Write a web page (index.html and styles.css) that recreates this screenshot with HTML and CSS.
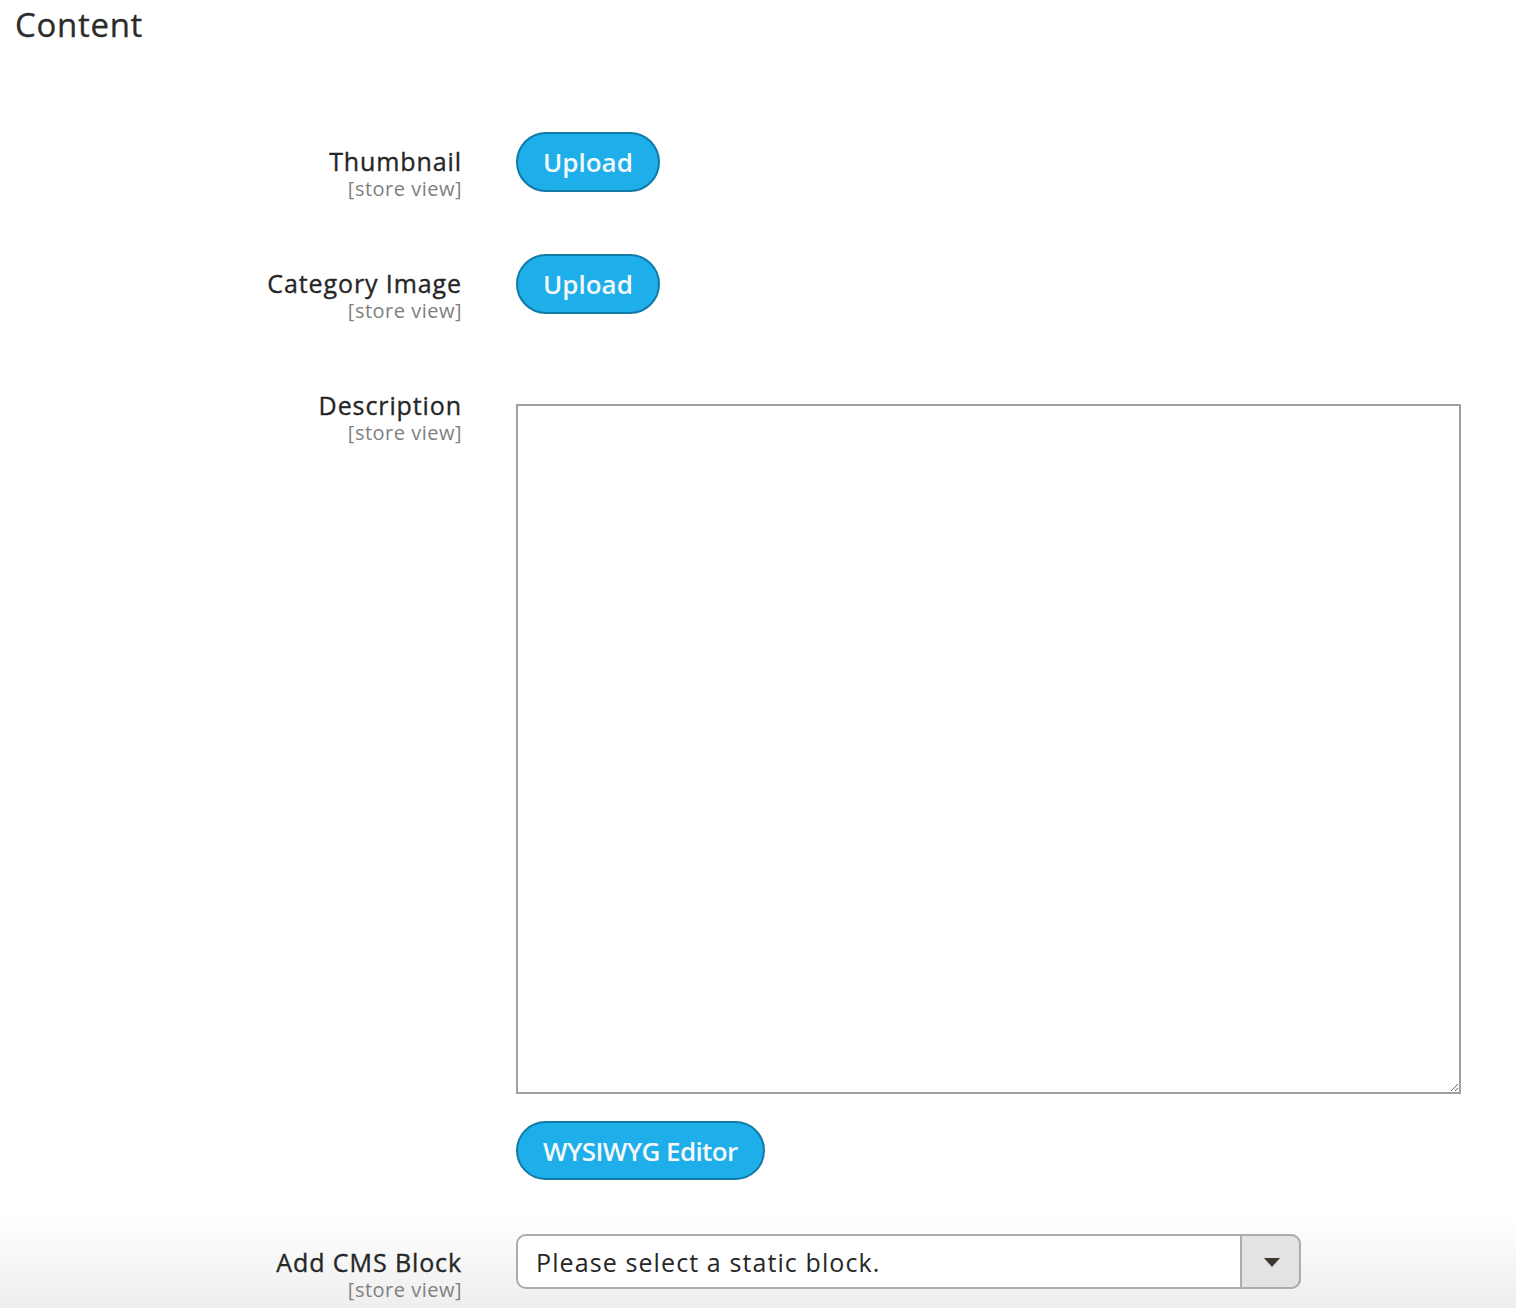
FILE: index.html
```html
<!DOCTYPE html>
<html lang="en">
<head>
  <meta charset="UTF-8" />
  <meta name="viewport" content="width=device-width, initial-scale=1.0"/>
  <title>Category Content</title>
  <link rel="stylesheet" href="styles.css">
</head>
<body>
  <h1 class="section-title">Content</h1>

  <div class="form">
    <div class="field">
      <div class="field-label">
        <span class="label-name">Thumbnail</span>
        <span class="label-scope">[store view]</span>
      </div>
      <div class="field-control">
        <button class="btn">Upload</button>
      </div>
    </div>

    <div class="field">
      <div class="field-label">
        <span class="label-name">Category Image</span>
        <span class="label-scope">[store view]</span>
      </div>
      <div class="field-control">
        <button class="btn">Upload</button>
      </div>
    </div>

    <div class="field field-description">
      <div class="field-label">
        <span class="label-name">Description</span>
        <span class="label-scope">[store view]</span>
      </div>
      <div class="field-control">
        <textarea class="textarea"></textarea>
        <button class="btn btn-wysiwyg">WYSIWYG Editor</button>
      </div>
    </div>

    <div class="field field-select">
      <div class="field-label">
        <span class="label-name">Add CMS Block</span>
        <span class="label-scope">[store view]</span>
      </div>
      <div class="field-control">
        <div class="select-wrap">
          <select class="select">
            <option>Please select a static block.</option>
          </select>
          <span class="select-arrow"></span>
        </div>
      </div>
    </div>
  </div>
</body>
</html>
```

FILE: styles.css
```css
* {
  box-sizing: border-box;
  margin: 0;
  padding: 0;
  font-family: 'Open Sans', 'Noto Sans', sans-serif;
}

body {
  color: #333;
  min-height: 1308px;
  background: linear-gradient(to bottom, #fff 1215px, #eeeeee 1308px);
  overflow: hidden;
}

.section-title {
  font-size: 33px;
  font-weight: 500;
  letter-spacing: 0.7px;
  line-height: 50px;
  padding-left: 15px;
  color: #2b2b2b;
  -webkit-text-stroke: 0.3px #2b2b2b;
}

.form {
  display: flex;
  flex-direction: column;
  gap: 52px;
  margin-top: 82px;
}

.field {
  display: grid;
  grid-template-columns: 462px 945px;
  column-gap: 54px;
  align-items: start;
}

.field-label {
  display: flex;
  flex-direction: column;
  align-items: flex-end;
  padding-top: 14px;
  text-align: right;
}

.label-name {
  font-size: 25px;
  font-weight: 500;
  letter-spacing: 0.9px;
  line-height: 30px;
  color: #262626;
  -webkit-text-stroke: 0.35px #262626;
}

.label-scope {
  font-size: 20px;
  letter-spacing: 0.5px;
  line-height: 26px;
  color: #808080;
}

.btn {
  height: 60px;
  padding: 0 25px;
  background-color: #1eaee9;
  border: 2px solid #127aa6;
  border-radius: 30px;
  color: #f4f8fb;
  font-size: 26px;
  font-weight: 600;
  cursor: pointer;
}

.field-description .field-control {
  padding-top: 28px;
}

.textarea {
  display: block;
  width: 945px;
  height: 690px;
  border: 2px solid #a0a0a0;
  resize: both;
  font-size: 20px;
}

.btn-wysiwyg {
  margin-top: 27px;
  height: 59px;
  letter-spacing: -0.6px;
}

.field-select {
  margin-top: 2px;
}

.field-select .field-label {
  padding-top: 13px;
}

.select-wrap {
  position: relative;
  width: 785px;
}

.select {
  appearance: none;
  -webkit-appearance: none;
  display: block;
  width: 100%;
  height: 55px;
  padding: 0 80px 0 18px;
  background: #fff;
  border: 2px solid #adadad;
  border-radius: 10px;
  color: #262626;
  font-size: 25px;
  letter-spacing: 1.1px;
}

.select-arrow {
  position: absolute;
  top: 0;
  right: 0;
  width: 61px;
  height: 55px;
  background: #e3e3e3;
  border: 2px solid #adadad;
  border-radius: 0 10px 10px 0;
  pointer-events: none;
}

.select-arrow::after {
  content: "";
  position: absolute;
  left: 22px;
  top: 22px;
  border-left: 8px solid transparent;
  border-right: 8px solid transparent;
  border-top: 9px solid #41362e;
}
```
